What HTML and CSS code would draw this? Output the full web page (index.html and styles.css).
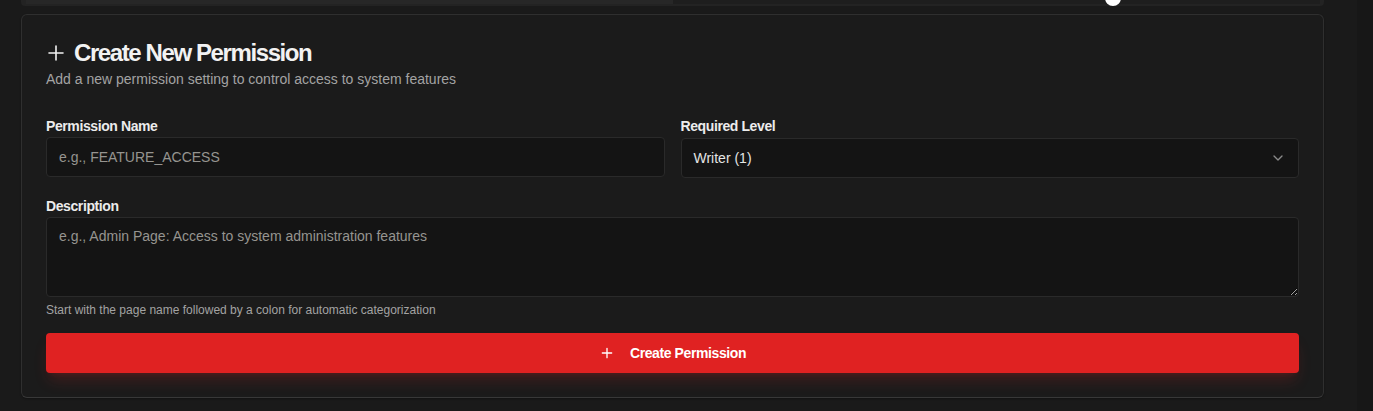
FILE: index.html
```html
<!DOCTYPE html>
<html lang="en">
<head>
    <meta charset="UTF-8">
    <meta name="viewport" content="width=device-width, initial-scale=1.0">
    <title>Permissions</title>
    <link rel="stylesheet" href="styles.css">
</head>
<body>
    <div class="page">
        <main class="main">
            <div class="prev-card">
                <div class="prev-track">
                    <div class="prev-left"></div>
                    <div class="prev-right"><span class="thumb"></span></div>
                </div>
            </div>

            <section class="card">
                <div class="card-header">
                    <h2 class="card-title">
                        <svg class="title-icon" width="20" height="20" viewBox="0 0 20 20" fill="none" stroke="currentColor" stroke-width="1.6" stroke-linecap="round">
                            <path d="M3 10h14M10 3v14"/>
                        </svg>
                        Create New Permission
                    </h2>
                    <p class="card-desc">Add a new permission setting to control access to system features</p>
                </div>

                <form class="card-body" id="permissionForm">
                    <div class="row">
                        <div class="field">
                            <label for="nameInput">Permission Name</label>
                            <input type="text" id="nameInput" placeholder="e.g., FEATURE_ACCESS">
                        </div>
                        <div class="field">
                            <label>Required Level</label>
                            <button type="button" class="select">
                                <span>Writer (1)</span>
                                <svg width="16" height="16" viewBox="0 0 24 24" fill="none" stroke="currentColor" stroke-width="2" stroke-linecap="round" stroke-linejoin="round">
                                    <path d="m6 9 6 6 6-6"/>
                                </svg>
                            </button>
                        </div>
                    </div>

                    <div class="field">
                        <label for="descInput">Description</label>
                        <textarea id="descInput" placeholder="e.g., Admin Page: Access to system administration features"></textarea>
                        <p class="hint">Start with the page name followed by a colon for automatic categorization</p>
                    </div>

                    <button type="submit" class="submit">
                        <svg width="16" height="16" viewBox="0 0 24 24" fill="none" stroke="currentColor" stroke-width="2" stroke-linecap="round">
                            <path d="M5 12h14M12 5v14"/>
                        </svg>
                        Create Permission
                    </button>
                </form>
            </section>
        </main>
        <div class="scrollbar"></div>
    </div>
</body>
</html>
```

FILE: styles.css
```css
html, body {
    margin: 0;
    padding: 0;
    height: 100%;
    overflow: hidden;
}

body {
    font-family: "Segoe UI", "Liberation Sans", Arial, sans-serif;
    background-color: #1a1a1a;
    color: #e8e8e8;
}

.page {
    display: flex;
    height: 100%;
}

.main {
    flex: 1;
    padding: 0 33px 0 21px;
}

.scrollbar {
    width: 16px;
    background-color: #171717;
}

/* bottom of the card above, cut off by the viewport */
.prev-card {
    height: 6px;
    background-color: #232323;
    border-radius: 0 0 4px 4px;
    padding: 0 4px 0 5px;
}

.prev-track {
    display: flex;
    height: 4px;
}

.prev-left {
    flex: 0 0 647px;
    background-color: #272727;
}

.prev-right {
    flex: 1;
    position: relative;
    background-color: #1e1e1e;
}

.thumb {
    position: absolute;
    left: 432px;
    top: -10px;
    width: 16px;
    height: 16px;
    border-radius: 50%;
    background: #fff;
}

.card {
    margin-top: 8px;
    background-color: #1b1b1b;
    border: 1px solid #2f2f2f;
    border-bottom-color: #383838;
    border-radius: 6px;
    padding: 24px;
    box-shadow: 0 1px 2px rgba(0, 0, 0, 0.3);
}

.card-title {
    display: flex;
    align-items: center;
    gap: 8px;
    margin: 0;
    font-size: 24px;
    line-height: 28px;
    font-weight: 700;
    letter-spacing: -1.4px;
    color: #f2f2f2;
}

.title-icon {
    flex-shrink: 0;
}

.card-desc {
    margin: 2px 0 0;
    font-size: 14px;
    line-height: 20px;
    color: #a3a3a3;
}

.card-body {
    padding-top: 27px;
}

.row {
    display: grid;
    grid-template-columns: 1fr 1fr;
    gap: 16px;
    margin-bottom: 18px;
}

.field {
    display: flex;
    flex-direction: column;
}

.field label {
    font-size: 14px;
    line-height: 20px;
    font-weight: 700;
    letter-spacing: -0.4px;
    color: #ececec;
    margin-bottom: 1px;
}

.field:last-child label {
    margin-bottom: 2px;
}

input[type="text"], textarea, .select {
    box-sizing: border-box;
    font-family: inherit;
    font-size: 14px;
    background-color: #141414;
    border: 1px solid #2a2a2a;
    border-radius: 4px;
    color: #e5e5e5;
    outline: none;
}

input[type="text"] {
    height: 40px;
    padding: 0 12px;
}

input::placeholder, textarea::placeholder {
    color: #969490;
}

.select {
    height: 40px;
    padding: 0 12px;
    display: flex;
    align-items: center;
    justify-content: space-between;
    text-align: left;
    cursor: pointer;
}

.select svg {
    color: #8a8a8a;
}

textarea {
    height: 80px;
    padding: 8px 12px;
    line-height: 20px;
    resize: vertical;
}

.hint {
    margin: 5px 0 0;
    font-size: 12px;
    line-height: 16px;
    color: #a3a3a3;
}

.submit {
    margin-top: 15px;
    width: 100%;
    height: 40px;
    display: flex;
    align-items: center;
    justify-content: center;
    gap: 15px;
    background-color: #e02222;
    color: #fff;
    border: none;
    border-radius: 4px;
    font-family: inherit;
    font-size: 14px;
    font-weight: 700;
    letter-spacing: -0.4px;
    cursor: pointer;
    box-shadow: 0 10px 15px -3px rgba(220, 38, 38, 0.2), 0 4px 6px -4px rgba(220, 38, 38, 0.2);
}

.submit:hover {
    background-color: #c81e1e;
}
```
